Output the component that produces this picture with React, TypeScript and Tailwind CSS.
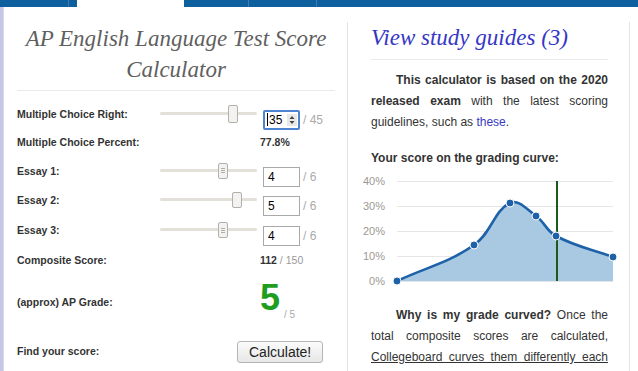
import clsx from "clsx";

type Pt = { x: number; y: number };

// chart.js style spline (tension 0.4)
function splinePath(pts: Pt[], t = 0.4) {
  const cps = pts.map((cur, i) => {
    const prev = pts[i - 1] || cur;
    const next = pts[i + 1] || cur;
    const d01 = Math.hypot(cur.x - prev.x, cur.y - prev.y);
    const d12 = Math.hypot(next.x - cur.x, next.y - cur.y);
    const s01 = d01 + d12 === 0 ? 0 : d01 / (d01 + d12);
    const s12 = d01 + d12 === 0 ? 0 : d12 / (d01 + d12);
    const fa = t * s01;
    const fb = t * s12;
    return {
      prev: { x: cur.x - fa * (next.x - prev.x), y: cur.y - fa * (next.y - prev.y) },
      next: { x: cur.x + fb * (next.x - prev.x), y: cur.y + fb * (next.y - prev.y) },
    };
  });
  let d = `M${pts[0].x},${pts[0].y}`;
  for (let i = 1; i < pts.length; i++) {
    const a = cps[i - 1].next;
    const b = cps[i].prev;
    d += ` C${a.x},${a.y} ${b.x},${b.y} ${pts[i].x},${pts[i].y}`;
  }
  return d;
}

const curve: Pt[] = [
  { x: 41, y: 106 },
  { x: 118, y: 70 },
  { x: 154, y: 28 },
  { x: 180, y: 41 },
  { x: 200, y: 61 },
  { x: 257, y: 82 },
];

function GradeChart() {
  const line = splinePath(curve);
  const area = `${line} L257,106 L41,106 Z`;
  const ticks = [
    { y: 6, label: "40%" },
    { y: 31, label: "30%" },
    { y: 56, label: "20%" },
    { y: 81, label: "10%" },
    { y: 106, label: "0%" },
  ];
  return (
    <svg width="262" height="110" className="ml-[-15px] mt-[8px] block">
      {ticks.map((t) => (
        <g key={t.label}>
          <line x1="41" x2="257" y1={t.y + 0.5} y2={t.y + 0.5} stroke="#e6e6e6" strokeWidth="1" />
          <text x="29" y={t.y + 4} textAnchor="end" fontSize="11" fill="#9d9995" fontFamily="'Liberation Sans', Arial, sans-serif">
            {t.label}
          </text>
        </g>
      ))}
      <path d={area} fill="#a9c9e3" />
      <line x1="201" x2="201" y1="6" y2="106" stroke="#1c5a1c" strokeWidth="2" />
      <path d={line} fill="none" stroke="#1d62a8" strokeWidth="2.6" />
      {curve.map((p) => (
        <circle key={p.x} cx={p.x} cy={p.y} r="4" fill="#1d62a8" stroke="#ffffff" strokeWidth="1" />
      ))}
    </svg>
  );
}

function Slider({ pos, grip, tall }: { pos: number; grip?: boolean; tall?: boolean }) {
  return (
    <div className="relative mb-[2px] h-[18px] w-[97px]">
      <div className="absolute left-0 right-0 top-[7px] h-[3px] rounded-full bg-[#e3dfd9]" />
      <div
        className={clsx(
          "absolute flex w-[10px] flex-col items-center justify-center gap-[1px] rounded-[2px] border border-[#b3b0ab] bg-[#f3f2f0]",
          tall ? "top-0 h-[18px]" : "top-[1px] h-[16px]"
        )}
        style={{ left: pos }}
      >
        {grip && (
          <>
            <div className="h-px w-[4px] bg-[#b0aca6]" />
            <div className="h-px w-[4px] bg-[#b0aca6]" />
            <div className="h-px w-[4px] bg-[#b0aca6]" />
          </>
        )}
      </div>
    </div>
  );
}

function NumBox({ value }: { value: string }) {
  return (
    <div className="mt-[10px] ml-[6px] flex h-[20px] w-[37px] items-center border border-[#a9a9a9] bg-white pl-[4px] text-[12px] text-black">
      {value}
    </div>
  );
}

function Row({ label, h, children }: { label: string; h: string; children?: React.ReactNode }) {
  return (
    <div className={clsx("flex items-center", h)}>
      <div className="w-[143px] text-[10.5px] font-bold text-[#333]">{label}</div>
      {children}
    </div>
  );
}

export default function App() {
  return (
    <div className="h-[371px] w-[638px] overflow-hidden bg-white font-['Liberation_Sans',Arial,sans-serif]">
      {/* top nav strip */}
      <div className="flex h-[7px] bg-[#0d5f9e]">
        <div className="w-[68px]" />
        <div className="w-px bg-[#3a7db5]" />
        <div className="ml-[8px] w-[107px] bg-white" />
        <div className="ml-[64px] w-px bg-[#3a7db5]" />
        <div className="ml-[67px] w-px bg-[#3a7db5]" />
      </div>

      <div className="flex h-[364px]">
        <div className="w-[4px] border-r border-[#dcdcdc] bg-[#c3c8ea]" />

        {/* calculator */}
        <div className="w-[343px] pl-[13px] pr-[12px] pt-[16px]">
          <h1 className="text-center font-['Liberation_Serif','Times_New_Roman',serif] text-[23px] leading-[31px] font-normal italic text-[#5f5f5f]">
            AP English Language Test Score
            <br />
            Calculator
          </h1>
          <div className="mt-[5px] border-t border-[#ebebeb]" />

          <div className="mt-[9px]">
            <Row label="Multiple Choice Right:" h="h-[29px]">
              <Slider pos={68} tall />
              <div className="mt-[10px] ml-[6px] flex h-[20px] w-[37px] items-center rounded-[2px] border-2 border-[#4d84d1] bg-white pl-[2px] text-[12px] text-black">
                <span className="mr-px h-[13px] w-px bg-black" />
                35
                <svg width="10" height="12" className="ml-auto mr-[1px]" viewBox="0 0 10 12">
                  <rect width="10" height="12" fill="#e9e9e9" />
                  <path d="M2.5 5 L5 2 L7.5 5 Z" fill="#444" />
                  <path d="M2.5 7 L5 10 L7.5 7 Z" fill="#444" />
                </svg>
              </div>
              <span className="mt-[10px] ml-[3px] text-[12px] text-[#aaa]">/ 45</span>
            </Row>

            <Row label="Multiple Choice Percent:" h="h-[28px]">
              <span className="ml-[100px] text-[10.5px] font-bold text-[#333]">77.8%</span>
            </Row>

            <Row label="Essay 1:" h="h-[29px]">
              <Slider pos={58} grip />
              <NumBox value="4" />
              <span className="mt-[10px] ml-[3px] text-[12px] text-[#aaa]">/ 6</span>
            </Row>

            <Row label="Essay 2:" h="h-[30px]">
              <Slider pos={72} />
              <NumBox value="5" />
              <span className="mt-[10px] ml-[3px] text-[12px] text-[#aaa]">/ 6</span>
            </Row>

            <Row label="Essay 3:" h="h-[30px]">
              <Slider pos={58} grip />
              <NumBox value="4" />
              <span className="mt-[10px] ml-[3px] text-[12px] text-[#aaa]">/ 6</span>
            </Row>

            <Row label="Composite Score:" h="h-[30px]">
              <span className="ml-[100px] text-[10.5px] text-[#999]">
                <b className="text-[#333]">112</b> / 150
              </span>
            </Row>

            <Row label="(approx) AP Grade:" h="h-[54px]">
              <div className="mb-[11px] ml-[100px] flex items-end">
                <span className="text-[36px] leading-none font-bold text-[#1f9d1f]">5</span>
                <span className="mb-[-4px] ml-[4px] text-[10px] leading-none text-[#aaa]">/ 5</span>
              </div>
            </Row>

            <Row label="Find your score:" h="h-[44px]">
              <button className="ml-[77px] h-[22px] rounded-[3px] border border-[#b5b5b5] bg-gradient-to-b from-[#fbfbfb] to-[#e7e7e7] px-[11px] text-[14px] leading-none text-[#222]">
                Calculate!
              </button>
            </Row>
          </div>
        </div>

        {/* info card */}
        <div className="mt-[15px] w-[283px] border-x border-[#e3e3e3] pl-[23px] pr-[21px]">
          <h2 className="font-['Liberation_Serif','Times_New_Roman',serif] text-[23px] leading-[31px] italic text-[#3636c6]">
            View study guides (3)
          </h2>
          <div className="mt-[6px] border-t border-[#ebebeb]" />

          <p className="mt-[10px] indent-[25px] text-justify text-[12px] leading-[21px] text-[#333]">
            <b>This calculator is based on the 2020 released exam</b> with the latest scoring guidelines, such as{" "}
            <span className="text-[#3838c4]">these</span>.
          </p>

          <div className="mt-[16px] text-[12px] leading-[18px] font-bold text-[#333]">Your score on the grading curve:</div>

          <GradeChart />

          <p className="mt-[20px] indent-[25px] text-justify text-[12px] leading-[21px] text-[#333]">
            <b>Why is my grade curved?</b> Once the total composite scores are calculated,{" "}
            <span className="underline">Collegeboard curves them differently each year</span> so the same composite
            score can earn a different grade from one exam to the next.
          </p>
        </div>
      </div>
    </div>
  );
}
